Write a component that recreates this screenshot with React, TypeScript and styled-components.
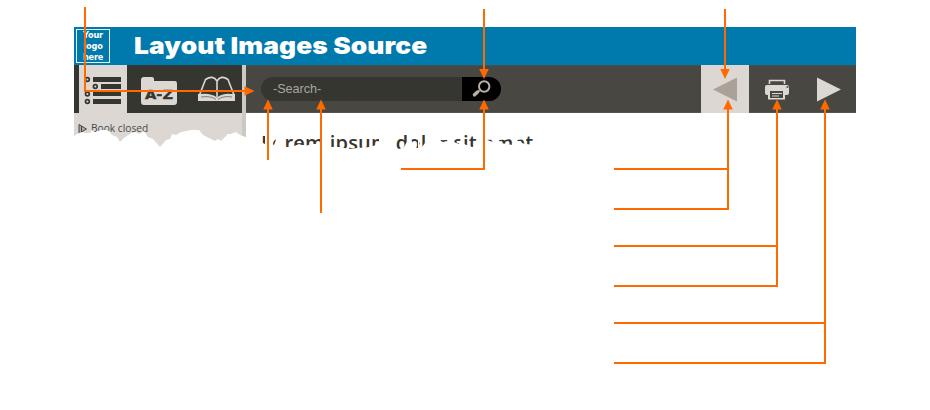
import React from 'react';
import styled, { createGlobalStyle } from 'styled-components';

const Global = createGlobalStyle`
  * { box-sizing: border-box; }
  body { margin: 0; background: #fff; font-family: "Liberation Sans", Arial, sans-serif; }
`;
const Page = styled.main`
  position: relative;
  width: 930px;
  height: 410px;
  padding: 27px 74px 0;
  overflow: hidden;
`;
const Reader = styled.div`
  width: 782px;
`;
const Header = styled.header`
  display: flex;
  align-items: center;
  height: 38px;
  padding-left: 2px;
  background: #0079ad;
  color: #fff;
`;
const Logo = styled.div`
  width: 34px;
  height: 34px;
  border: 1px solid #e4f1f7;
  font: 800 8.2px/11px "DejaVu Sans", sans-serif;
  letter-spacing: -0.2px;
  text-align: center;
  white-space: nowrap;
`;
const Title = styled.h1`
  margin: 0 0 0 24px;
  font: 900 23.5px/36px Inter, sans-serif;
  letter-spacing: 0.1px;
  white-space: nowrap;
  transform: scaleX(1.12);
  transform-origin: left center;
`;
const Toolbar = styled.nav`
  display: flex;
  height: 48px;
  background: #484741;
  border-top: 1px solid #3f5157;
  border-bottom: 1px solid #56544e;
`;
const TabStrip = styled.div`
  display: flex;
  width: 172px;
  height: 48px;
  margin-top: -1px;
  padding-left: 5px;
  background: #363630;
  border-right: 4px solid #ccc8c4;
`;
const Tab = styled.div<{ $active?: boolean; $width: number }>`
  width: ${p => p.$width}px;
  height: 48px;
  background: ${p => (p.$active ? '#dcd7d3' : 'transparent')};
  svg { display: block; }
`;
const Search = styled.div`
  display: flex;
  width: 240px;
  height: 24px;
  margin: 11px 0 0 15px;
  border-radius: 12px;
  background: #363630;
  overflow: hidden;
`;
const SearchText = styled.span`
  flex: 1;
  padding-left: 12px;
  color: #a9a59e;
  font-size: 12.6px;
  line-height: 25px;
`;
const SearchButton = styled.div`
  width: 39px;
  height: 24px;
  background: #000;
  svg { display: block; }
`;
const Actions = styled.div`
  display: flex;
  margin: -1px 7px 0 auto;
`;
const Action = styled.div<{ $active?: boolean }>`
  width: 48px;
  height: 48px;
  margin-right: ${p => (p.$active ? 4 : 2)}px;
  background: ${p => (p.$active ? '#dcd7d3' : 'transparent')};
  &:last-child { margin-right: -2px; }
  svg { display: block; }
`;
const Body = styled.div`
  display: flex;
  height: 48px;
`;
const Contents = styled.aside`
  display: flex;
  width: 172px;
  height: 36px;
  padding: 9px 0 0 4px;
  background: #dcd7d3;
  border-right: 4px solid #ccc8c4;
  color: #484848;
  font: 10.2px/13px "Open Sans", sans-serif;
  white-space: nowrap;
  clip-path: polygon(0 23px,3px 21px,7px 19px,12px 20px,16px 20px,18px 17px,21px 19px,27px 17px,32px 17px,35px 18px,38px 22px,43px 24px,46px 29px,50px 25px,57px 20px,62px 19px,65px 21px,70px 18px,74px 24px,79px 26px,86px 34px,92px 27px,96px 26px,98px 21px,102px 22px,107px 19px,117px 17px,125px 17px,129px 22px,135px 25px,141px 28px,144px 26px,147px 28px,154px 21px,157px 21px,162px 19px,166px 22px,172px 24px,172px 0,0 0);
  svg { margin: 1px 3px 0 0; }
`;
const Excerpt = styled.h2`
  width: 300px;
  height: 40px;
  margin: 0 0 0 15px;
  color: #37352f;
  font: 600 20px/24px "Open Sans", sans-serif;
  letter-spacing: 0.2px;
  padding-top: 18px;
  white-space: nowrap;
  clip-path: path("M0 20H4V31L0 29Z M11 31L14 24H16L13 32Z M23 20H60V31H51L44 33L38 31L31 34H23Z M68 20H90V24H118V31L109 34L96 35L88 36L79 34H68Z M134 20H147V27L143 34L138 36L134 34Z M150 24H157V35L152 34Z M158 20H164V30L161 34L158 31Z M178 27H189L184 30Z M193 25H200L198 31L193 29Z M203 20H218V33L211 34L203 31Z M226 27L235 26L232 29Z M238 27L252 26V32L239 30Z M256 27L264 26V31L258 29Z M265 22H274V32L265 31Z");
`;
const Callouts = styled.svg`
  position: absolute;
  inset: 0;
  pointer-events: none;
`;

const IndexIcon = () => (
  <svg width="48" height="48" fill="#363630">
    <path d="M14 12h28v5H14zM22 19h20v5H22zM14 27h28v4H14zM14 34h28v5H14z" />
    <g fill="#dcd7d3" stroke="#363630" strokeWidth="1.7">
      <circle cx="8.4" cy="14.5" r="1.9" /><circle cx="16.3" cy="21.5" r="1.9" />
      <circle cx="8.4" cy="29" r="1.9" /><circle cx="8.4" cy="36.5" r="1.9" />
    </g>
  </svg>
);
const GlossaryIcon = () => (
  <svg width="64" height="48">
    <path d="M14 15q0-3 3-3h8q2 0 2 2v2h21q2 0 2 3v18q0 3-3 3H17q-3 0-3-3z" fill="#dcd7d3" />
    <text x="18" y="33.5" fill="#363630" stroke="#363630" strokeWidth=".4" fontFamily="DejaVu Sans, sans-serif" fontWeight="bold" fontSize="13" textLength="28" lengthAdjust="spacingAndGlyphs">A-Z</text>
  </svg>
);
const BookIcon = () => (
  <svg width="51" height="48" fill="none" stroke="#dcd7d3">
    <path d="M8.5 30 14.5 14.5Q22 9.5 26 16 30 9.5 37 14.5L43 30M26 16v16" strokeWidth="1.6" />
    <path d="M7 29h3Q20 28 26 32.5 32 28 40 29h4v7H7z" fill="#dcd7d3" stroke="none" />
    <path d="M10 32q10-1.5 15 2.5M41 32q-9-1.5-14 2.5" stroke="#56544e" strokeWidth=".7" />
  </svg>
);
const PrinterIcon = () => (
  <svg width="48" height="48">
    <path d="M16.5 19v-3.5h15V19" fill="none" stroke="#dcd7d3" strokeWidth="1.6" />
    <path d="M14 20h20q2 0 2 2v6q0 2-2 2H14q-2 0-2-2v-6q0-2 2-2z" fill="#dcd7d3" />
    <path d="M15 25h17v9.5H15z" fill="#dcd7d3" /><path d="M17 26h13v7H17z" fill="#484741" />
    <path d="M19 28.5h10M19 31h7" stroke="#dcd7d3" strokeWidth="1.2" /><circle cx="34.5" cy="22" r="1" fill="#484741" />
  </svg>
);

const heads = [
  [268, 99.5, 0], [321, 99.5, 0], [484, 99.5, 0], [728, 99.5, 0], [777, 99.5, 0], [825, 99.5, 0],
  [484, 79, 180], [725, 79, 180], [254.5, 91, 90],
];

export default function App() {
  return (
    <Page>
      <Global />
      <Reader>
        <Header>
          <Logo>Your<br />logo<br />here</Logo>
          <Title>Layout Images Source</Title>
        </Header>
        <Toolbar>
          <TabStrip>
            <Tab $active $width={48}><IndexIcon /></Tab>
            <Tab $width={64}><GlossaryIcon /></Tab>
            <Tab $width={51}><BookIcon /></Tab>
          </TabStrip>
          <Search>
            <SearchText>-Search-</SearchText>
            <SearchButton>
              <svg width="39" height="24" fill="none" stroke="#b9b0a6">
                <circle cx="22.2" cy="9.5" r="5.2" strokeWidth="2" />
                <path d="m17.5 13.5-2 1.8" strokeWidth="2" /><path d="m15.5 15-3 2.8" strokeWidth="3.5" strokeLinecap="round" />
              </svg>
            </SearchButton>
          </Search>
          <Actions>
            <Action $active><svg width="48" height="48"><path d="m12 24.5 24-12v24z" fill="#aaa299" /></svg></Action>
            <Action><PrinterIcon /></Action>
            <Action><svg width="48" height="48"><path d="m38 24.5-24-12v24z" fill="#dcd7d3" /></svg></Action>
          </Actions>
        </Toolbar>
        <Body>
          <Contents>
            <svg width="10" height="12"><path d="M1 1.5 8.5 6 1 10.5z" fill="#aaa" stroke="#484741" /><path d="M3.5 3v6" stroke="#484741" /></svg>
            Book closed
          </Contents>
          <Excerpt>Lorem ipsum dolor sit amet</Excerpt>
        </Body>
      </Reader>
      <Callouts width="930" height="410">
        <path d="M85 7v84h162M484 9v62M725 9v62M268 160v-52M321 213v-105M401 169h83v-61M614 169h114M614 209h114V108M614 246h163M614 286h163V108M614 323h211M614 363h211V108" fill="none" stroke="#ff6a00" strokeWidth="2" />
        {heads.map(([x, y, angle]) => (
          <path key={`${x}-${y}`} d="M0 0 4.8 10h-9.6z" transform={`translate(${x} ${y}) rotate(${angle})`} fill="#ff6a00" />
        ))}
      </Callouts>
    </Page>
  );
}
